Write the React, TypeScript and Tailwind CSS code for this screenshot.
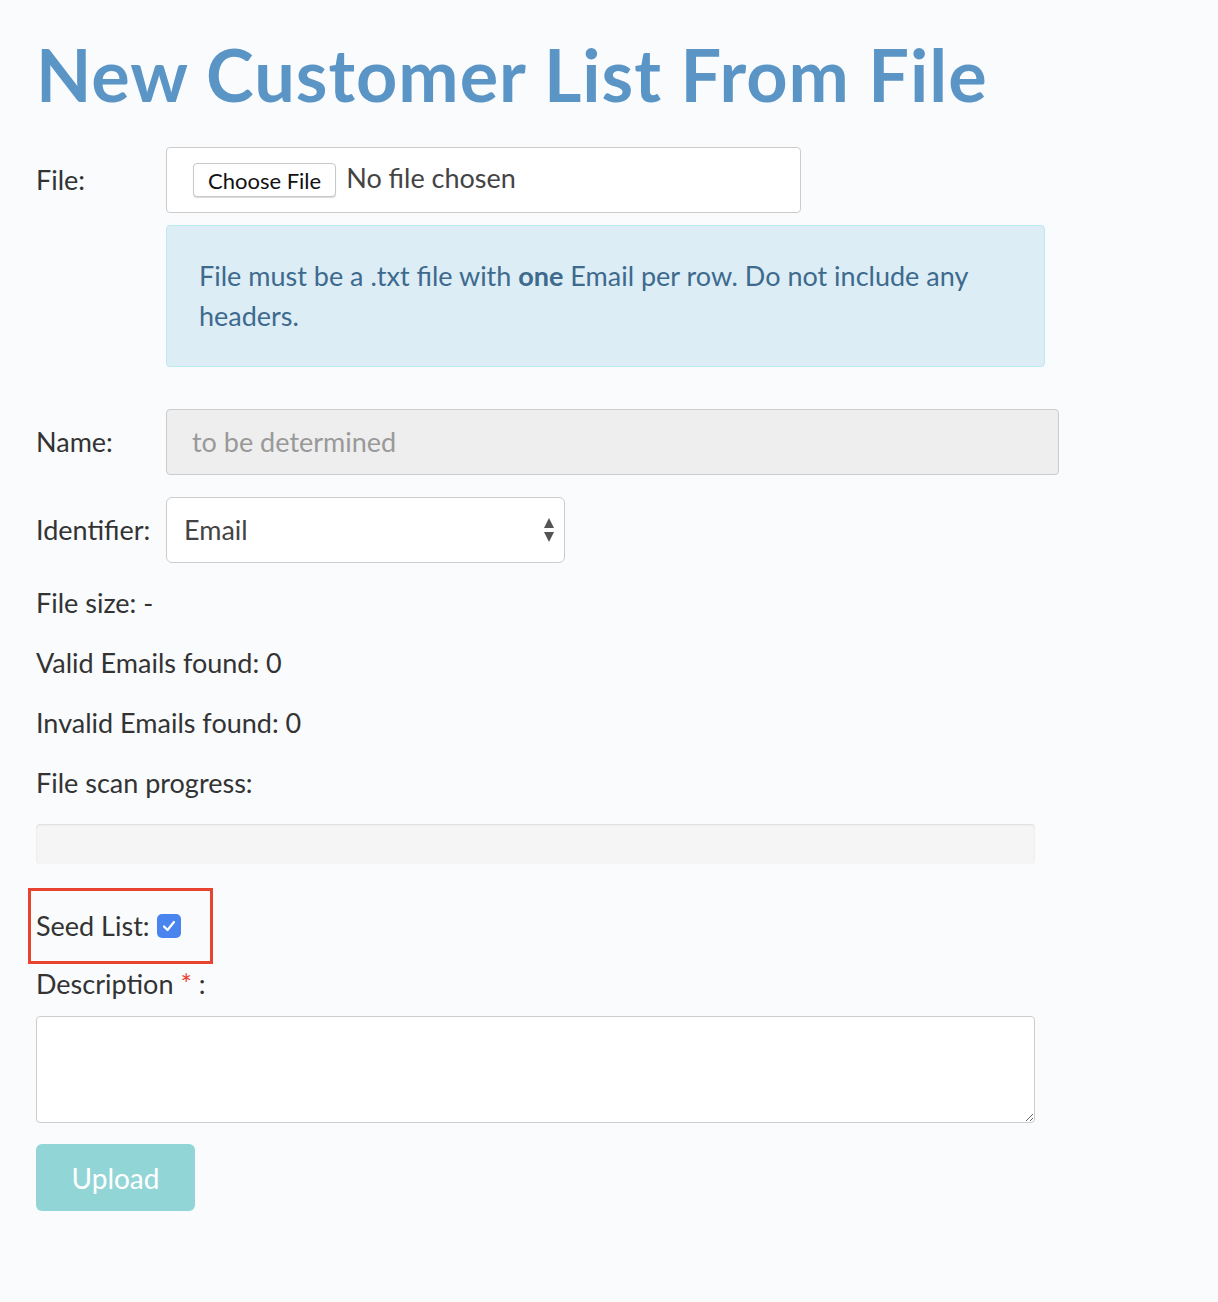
import React from "react";

const font = { fontFamily: "Lato, 'Open Sans', sans-serif" };

const Row = ({ label, children }: { label: React.ReactNode; children: React.ReactNode }) => (
  <div className="flex items-center">
    <div className="w-[130px] shrink-0 text-[27px] text-[#333]">{label}</div>
    {children}
  </div>
);

export default function App() {
  return (
    <div className="min-h-[1302px] bg-[#f9fbfd] px-9 pt-[34px] text-[#333]" style={font}>
      <h1 className="text-[72px] font-bold leading-[80px] tracking-[1px] text-[#5a95c6]">New Customer List From File</h1>

      <div className="mt-[33px]">
        <Row label="File:">
          <div className="flex h-[66px] w-[635px] items-start rounded border border-[#ccc] bg-white pl-[26px] pt-[15px]">
            <button className="h-[34px] rounded-[4px] border border-[#c8c8c8] bg-white px-[14px] text-[22px] text-[#111] shadow-[0_1px_1px_rgba(0,0,0,0.15)]">
              Choose File
            </button>
            <span className="ml-[10px] text-[27px] leading-[30px] text-[#444]">No file chosen</span>
          </div>
        </Row>
        <div className="ml-[130px] mt-3 w-[879px] rounded border border-[#bce8f1] bg-[#dcedf6] px-8 pb-[30px] pt-[30px] text-[27px] leading-[40px] text-[#3d6a8d]">
          File must be a .txt file with <b className="font-bold">one</b> Email per row. Do not include any headers.
        </div>
      </div>

      <div className="mt-[42px]">
        <Row label="Name:">
          <div className="flex h-[66px] w-[893px] items-center rounded border border-[#ccc] bg-[#eee] pl-[25px] text-[27px] text-[#999]">
            to be determined
          </div>
        </Row>
      </div>

      <div className="mt-[22px]">
        <Row label="Identifier:">
          <div className="flex h-[66px] w-[399px] items-center justify-between rounded-md border border-[#ccc] bg-white pl-[17px] pr-[9px] text-[27px] text-[#444]">
            <span>Email</span>
            <svg width="12" height="26" viewBox="0 0 12 26">
              <path d="M6 1 L11 11 L1 11 Z" fill="#555" />
              <path d="M6 25 L11 15 L1 15 Z" fill="#555" />
            </svg>
          </div>
        </Row>
      </div>

      <div className="mt-5 flex flex-col gap-5 text-[27px] leading-[40px]">
        <div>File size: -</div>
        <div>Valid Emails found: 0</div>
        <div>Invalid Emails found: 0</div>
        <div>File scan progress:</div>
      </div>

      <div className="mt-[21px] h-[40px] w-[999px] rounded bg-[#f5f5f5] shadow-[inset_0_1px_2px_rgba(0,0,0,0.1)]" />

      <div className="-ml-2 mt-6 flex h-[76px] w-[185px] items-center border-[3px] border-[#e8432e] pl-[5px] text-[27px]">
        <span>Seed List:</span>
        <span className="ml-[7px] flex h-6 w-6 items-center justify-center rounded-[5px] bg-[#4a84ee]">
          <svg width="14" height="14" viewBox="0 0 14 14">
            <path d="M2 7.5 L5.5 11 L12 3" fill="none" stroke="white" strokeWidth="2.2" strokeLinecap="round" strokeLinejoin="round" />
          </svg>
        </span>
      </div>

      <div className="text-[27px] leading-[40px]">
        Description <span className="text-[#e8432e]">*</span> :
      </div>

      <textarea className="mt-3 block h-[107px] w-[999px] rounded border border-[#ccc] bg-white" />

      <button className="mt-[21px] h-[67px] w-[159px] rounded-md bg-[#92d5d6] text-[28px] text-white">Upload</button>
    </div>
  );
}
